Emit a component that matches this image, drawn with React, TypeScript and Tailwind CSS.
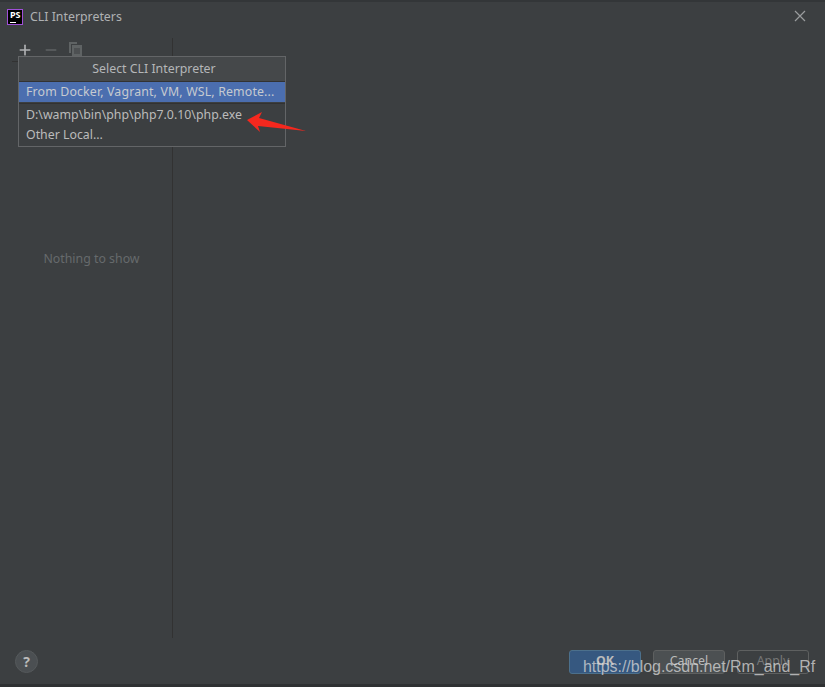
import { Plus, Minus } from "lucide-react"

function PsLogo() {
  return (
    <div className="relative w-4 h-4 bg-black border border-[#a04fd8] shrink-0 -mt-[1px]">
      <span className="absolute left-[2px] top-[0px] text-[9px] leading-[9px] font-bold text-white">PS</span>
      <div className="absolute left-[2px] bottom-[1px] w-[6px] h-[1px] bg-white" />
    </div>
  )
}

function CopyIcon() {
  return (
    <svg width="13" height="15" viewBox="0 0 13 15" fill="none">
      <path d="M1 11V1h7" stroke="#5f6364" strokeWidth="2" />
      <rect x="3" y="3" width="10" height="12" fill="#5f6364" />
      <path d="M5 7h6M5 9h6M5 11h6" stroke="#3c3f41" strokeWidth="1" />
    </svg>
  )
}

function Arrow() {
  return (
    <svg className="absolute left-[246px] top-[109px]" width="62" height="22" viewBox="0 0 62 22">
      <path d="M1 9 L16 1 L13 7 L60 20 L12 15 L14 21 Z" fill="#f5281e" />
    </svg>
  )
}

export default function App() {
  return (
    <div className="relative w-[825px] h-[687px] flex flex-col bg-[#3c3f41] border-t-2 border-b-[3px] border-t-[#333638] border-b-[#2f3133] text-[12.35px] text-[#bbbbbb] font-['Noto_Sans','Open_Sans',sans-serif] overflow-hidden">
      {/* Title bar */}
      <div className="h-[36px] shrink-0 flex items-center pl-[7px] pr-[19px] pb-[6px]">
        <PsLogo />
        <span className="ml-[7px] text-[#afb1b3]">CLI Interpreters</span>
        <svg className="ml-auto -mt-[2px]" width="12" height="12" viewBox="0 0 12 12">
          <path d="M1 1l10 10M11 1L1 11" stroke="#9a9c9e" strokeWidth="1.2" />
        </svg>
      </div>

      {/* Main */}
      <div className="flex h-[600px] shrink-0">
        <div className="w-[173px] border-r border-[#323232] shrink-0 flex flex-col">
          <div className="h-[24px] flex items-center gap-[10px] pl-[17px] border-b border-[#323232] ml-[12px]">
            <Plus className="w-4 h-4 -ml-[12px] text-[#afb1b3]" strokeWidth={2.5} />
            <Minus className="w-4 h-4 text-[#5f6364]" strokeWidth={2.5} />
            <CopyIcon />
          </div>
          <div className="flex-1 flex items-start justify-center pl-[11px] pt-[188px] text-[#666a6c]">Nothing to show</div>
        </div>
        <div className="flex-1" />
      </div>

      {/* Footer */}
      <div className="flex-1 flex items-center pl-[15px] pr-[16px] pt-[1px]">
        <div className="w-[23px] h-[23px] rounded-full bg-[#4b4f52] border border-[#55595b] flex items-center justify-center text-[14px] text-[#bbbbbb] font-bold">?</div>
        <div className="ml-auto flex items-center">
          <button className="w-[72px] h-[24px] rounded-[3px] bg-[#365880] border border-[#4c708c] text-[#bbbbbb] font-bold">OK</button>
          <button className="ml-[12px] w-[72px] h-[24px] rounded-[3px] bg-[#4c5052] border border-[#5e6060] text-[#bbbbbb]">Cancel</button>
          <button className="ml-[12px] w-[72px] h-[24px] rounded-[3px] border border-[#5e6060] text-[#777777]">Apply</button>
        </div>
      </div>

      {/* Popup */}
      <div className="absolute left-[18px] top-[54px] w-[268px] h-[91px] bg-[#3c3f41] border border-[#636567] flex flex-col">
        <div className="h-[25px] bg-[#45484a] border-b border-[#323232] flex items-center justify-center pl-[4px] text-[#b4b6b8]">Select CLI Interpreter</div>
        <div className="h-[20px] bg-[#4b6eaf] flex items-center pl-[7px] tracking-[0.15px] text-[#c6cad0]">From Docker, Vagrant, VM, WSL, Remote...</div>
        <div className="h-[1px] mt-[1px] bg-[#323232]" />
        <div className="h-[20px] flex items-center pl-[7px] mt-[1px]">D:\wamp\bin\php\php7.0.10\php.exe</div>
        <div className="h-[20px] flex items-center pl-[7px]">Other Local...</div>
      </div>

      <Arrow />

      {/* Watermark */}
      <span className="absolute left-[583px] top-[653px] text-[16px] leading-[24px] tracking-[-0.03px] text-[#d8d8d8]/75 font-['Liberation_Sans',sans-serif]">https://blog.csdn.net/Rm_and_Rf</span>
    </div>
  )
}
